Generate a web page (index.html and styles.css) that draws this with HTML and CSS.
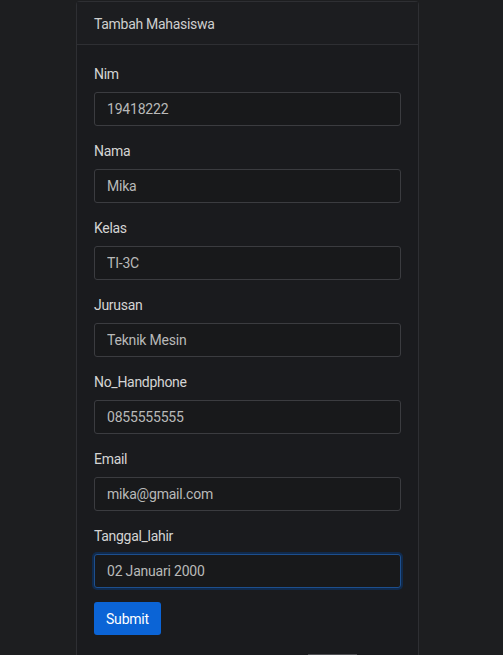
FILE: index.html
```html
<!DOCTYPE html>
<html lang="id">
<head>
<meta charset="utf-8">
<title>Tambah Mahasiswa</title>
<link rel="stylesheet" href="styles.css">
</head>
<body>
<div class="page">
  <div class="card">
    <div class="card-header">Tambah Mahasiswa</div>
    <form class="card-body">
      <div class="group">
        <label class="label">Nim</label>
        <input class="control" type="text" value="19418222">
      </div>
      <div class="group">
        <label class="label">Nama</label>
        <input class="control" type="text" value="Mika">
      </div>
      <div class="group">
        <label class="label">Kelas</label>
        <input class="control" type="text" value="TI-3C">
      </div>
      <div class="group">
        <label class="label">Jurusan</label>
        <input class="control" type="text" value="Teknik Mesin">
      </div>
      <div class="group">
        <label class="label">No_Handphone</label>
        <input class="control" type="text" value="0855555555">
      </div>
      <div class="group">
        <label class="label">Email</label>
        <input class="control" type="text" value="mika@gmail.com">
      </div>
      <div class="group">
        <label class="label">Tanggal_lahir</label>
        <input class="control focused" type="text" value="02 Januari 2000">
      </div>
      <button class="btn" type="button">Submit</button>
      <div class="peek"></div>
    </form>
  </div>
</div>
</body>
</html>
```

FILE: styles.css
```css
html, body {
  margin: 0;
  padding: 0;
  background: #1d1e20;
  height: 100%;
  overflow: hidden;
}
body {
  font-family: Roboto, "Noto Sans", sans-serif;
  font-size: 14px;
  line-height: 21px;
  letter-spacing: -0.3px;
  color: #d2d2d2;
}
.page {
  padding-left: 76px;
  padding-top: 1px;
}
.card {
  width: 343px;
  box-sizing: border-box;
  border: 1px solid #2e2f33;
  border-bottom: none;
  border-radius: 4px 4px 0 0;
  background: #1a1b1e;
}
.card-header {
  height: 43px;
  box-sizing: border-box;
  padding: 12px 17px 10px;
  border-bottom: 1px solid #2e2f33;
  background: #1c1d20;
  color: #cfcfcf;
}
.card-body {
  display: flex;
  flex-direction: column;
  align-items: flex-start;
  padding: 18px 16px 0 17px;
  margin: 0;
}
.group {
  display: flex;
  flex-direction: column;
  width: 100%;
  margin-bottom: 14px;
}
.label {
  padding-top: 1px;
  margin-bottom: 7px;
  color: #d4d4d4;
}
.control {
  box-sizing: border-box;
  width: 307px;
  height: 34px;
  padding: 0 12px;
  margin: 0;
  border: 1px solid #3b3c40;
  border-radius: 3px;
  background: #18191b;
  color: #b9b9b9;
  font-family: inherit;
  font-size: 14px;
  letter-spacing: -0.2px;
  outline: none;
}
.control.focused {
  border-color: #1d4f8e;
  box-shadow: 0 0 0 2px #102a4c;
}
.btn {
  height: 33px;
  padding: 0 12px;
  border: none;
  border-radius: 3px;
  background: #0b64d6;
  color: #ffffff;
  font-family: inherit;
  font-size: 14px;
  letter-spacing: -0.2px;
}
.peek {
  margin-top: 19px;
  margin-left: 214px;
  width: 49px;
  height: 2px;
  background: #4d4e52;
}
```
